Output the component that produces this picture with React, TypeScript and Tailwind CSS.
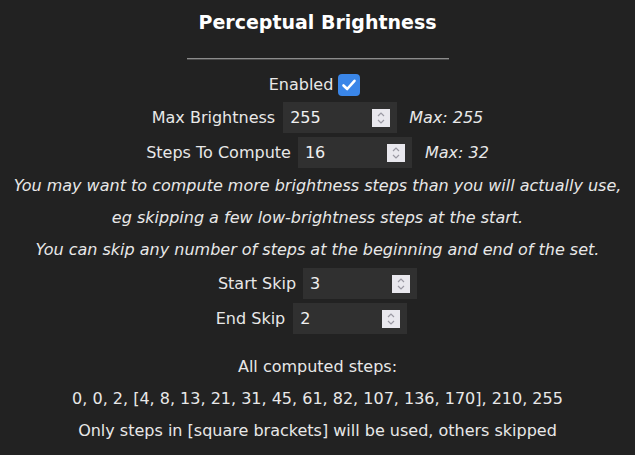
import React from "react";

const font = { fontFamily: '"DejaVu Sans", "Liberation Sans", sans-serif' };

function Spin() {
  return (
    <div className="w-[18px] h-[18px] bg-[#e9e8ee] flex items-center justify-center">
      <svg width="18" height="18" viewBox="0 0 18 18" fill="none" stroke="#9a99a3" strokeWidth="1.2">
        <path d="M6 7 L9 4 L12 7" />
        <path d="M6 11 L9 14 L12 11" />
      </svg>
    </div>
  );
}

function NumBox({ value }: { value: string }) {
  return (
    <div className="w-[114px] h-[31px] bg-[#303030] flex items-center pl-[7px] pr-[7px] justify-between">
      <span className="text-[16px] text-[#f0f0f0]">{value}</span>
      <Spin />
    </div>
  );
}

export default function App() {
  return (
    <div style={font} className="w-[635px] h-[455px] bg-[#222222] text-[#e8e8e8] text-[16px] flex flex-col items-center overflow-hidden">
      <div className="h-[44px] pt-[1px] flex items-center text-[19px] font-bold text-white">Perceptual Brightness</div>
      <div className="mt-[14px] w-[262px] h-[2px] border-t border-t-[#8c8c8c] border-b border-b-[#4a4a4a]"></div>
      <div className="mt-[14px] h-[22px] flex items-center gap-[5px]">
        <span>Enabled</span>
        <div className="w-[22px] h-[22px] mr-[6px] rounded-[4px] bg-[#3a86e8] flex items-center justify-center">
          <svg width="16" height="16" viewBox="0 0 16 16" fill="none" stroke="white" strokeWidth="2.6" strokeLinecap="round" strokeLinejoin="round">
            <path d="M2.5 8.5 L6.2 12 L13.5 3.8" />
          </svg>
        </div>
      </div>
      <div className="mt-[6px] h-[31px] flex items-center">
        <span className="mr-[8px]">Max Brightness</span>
        <NumBox value="255" />
        <span className="ml-[12px] italic">Max: 255</span>
      </div>
      <div className="mt-[4px] h-[31px] flex items-center">
        <span className="mr-[7px]">Steps To Compute</span>
        <NumBox value="16" />
        <span className="ml-[13px] italic">Max: 32</span>
      </div>
      <div className="mt-[2px] italic flex flex-col items-center">
        <div className="h-[32px] flex items-center">You may want to compute more brightness steps than you will actually use,</div>
        <div className="h-[32px] flex items-center">eg skipping a few low-brightness steps at the start.</div>
        <div className="h-[32px] flex items-center">You can skip any number of steps at the beginning and end of the set.</div>
      </div>
      <div className="mt-[2px] h-[31px] flex items-center">
        <span className="mr-[7px]">Start Skip</span>
        <NumBox value="3" />
      </div>
      <div className="mt-[4px] h-[31px] flex items-center">
        <span className="mr-[8px]">End Skip</span>
        <NumBox value="2" />
        <span className="w-[12px]"></span>
      </div>
      <div className="mt-[17px] flex flex-col items-center">
        <div className="h-[32px] flex items-center">All computed steps:</div>
        <div className="h-[32px] flex items-center">0, 0, 2, [4, 8, 13, 21, 31, 45, 61, 82, 107, 136, 170], 210, 255</div>
        <div className="h-[32px] flex items-center">Only steps in [square brackets] will be used, others skipped</div>
      </div>
    </div>
  );
}
